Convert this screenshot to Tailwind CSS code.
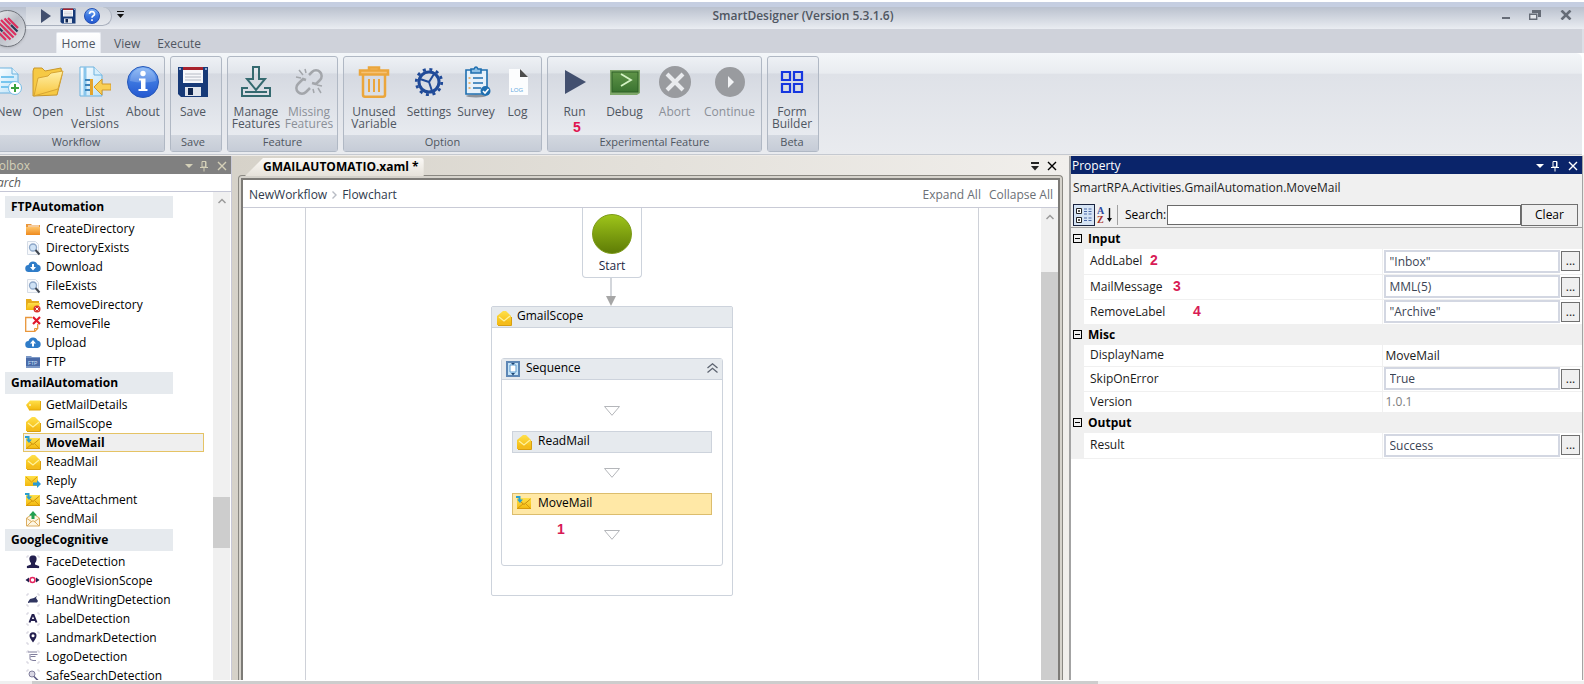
<!DOCTYPE html>
<html lang="en">
<head>
  <meta charset="UTF-8" />
  <meta name="viewport" content="width=device-width, initial-scale=1.0" />
  <title>SmartDesigner</title>

  <!-- Tailwind CSS for styling -->
  <script src="https://cdn.jsdelivr.net/npm/@tailwindcss/browser@4"></script>
</head>

<body class="h-screen flex flex-col overflow-hidden bg-white font-['Open_Sans',sans-serif] text-[12px] leading-4 text-black">

  <!-- Shared icons -->
  <svg class="absolute size-0" aria-hidden="true">
    <defs>
      <linearGradient id="gYellow" x1="0" y1="0" x2="0" y2="1"><stop offset="0" stop-color="#ffe04a" /><stop offset="1" stop-color="#f2b70c" /></linearGradient>
      <linearGradient id="gFolder" x1="0" y1="0" x2="0" y2="1"><stop offset="0" stop-color="#fff0a8" /><stop offset="1" stop-color="#f8c53c" /></linearGradient>
      <linearGradient id="gOrange" x1="0" y1="0" x2="0" y2="1"><stop offset="0" stop-color="#ffc56b" /><stop offset="1" stop-color="#ee8a1d" /></linearGradient>
      <linearGradient id="gBlue" x1="0" y1="0" x2="0" y2="1"><stop offset="0" stop-color="#7fb2f5" /><stop offset="0.5" stop-color="#3b76df" /><stop offset="1" stop-color="#2458d0" /></linearGradient>
      <linearGradient id="gGreen" x1="0" y1="0" x2="0" y2="1"><stop offset="0" stop-color="#5f9448" /><stop offset="1" stop-color="#3a7330" /></linearGradient>
      <linearGradient id="gPage" x1="0" y1="0" x2="1" y2="1"><stop offset="0" stop-color="#ffffff" /><stop offset="1" stop-color="#b9e1f8" /></linearGradient>
    </defs>
    <symbol id="floppy" viewBox="0 0 32 32">
      <path d="M1 1h30v30H4l-3-3z" fill="#173a78" />
      <rect x="6" y="1" width="20" height="3" fill="#a8222c" />
      <rect x="6" y="4" width="20" height="13" fill="#f6f7fa" />
      <path d="M8 8h16M8 11h16M8 14h16" stroke="#b5bac4" />
      <rect x="8" y="21" width="16" height="9" fill="#dfe4ec" />
      <rect x="11" y="22" width="5" height="7" fill="#10264f" />
      <path d="M2 2h2v2H2zM28 2h2v2h-2z" fill="#8aa3cc" />
    </symbol>
    <symbol id="mailOpen" viewBox="0 0 16 16">
      <path d="M1 6l6-5h3l5 5v9H1z" fill="url(#gYellow)" />
      <path d="M1 15l6-5h3l5 5" fill="#f4bc1c" />
      <path d="M3 7l5 4 6-5" fill="none" stroke="#fff3a0" stroke-width="1.2" />
      <path d="M2 15.500h13.500V7" fill="none" stroke="#d79f12" />
    </symbol>
    <symbol id="mailMove" viewBox="0 0 16 16">
      <rect x="1" y="3" width="14" height="11" fill="url(#gYellow)" />
      <path d="M1 13.500h14M2 13l5-4M14 13L10 9" stroke="#d99a0a" fill="none" />
      <path d="M5 7l3 2.500L14.500 4" stroke="#c98d08" fill="none" />
      <path d="M0 1h4.500v3.500H7L4 8 1 4.500h1.500V3H0z" fill="#2a9fd0" />
    </symbol>
    <symbol id="mailTag" viewBox="0 0 16 16">
      <path d="M1 8l4-4.500h10v9.500H4z" fill="url(#gYellow)" />
      <path d="M4 13h11.500V4" fill="none" stroke="#e0a80f" />
      <circle cx="5" cy="8" r="1" fill="#fff6bd" />
    </symbol>
    <symbol id="mailReply" viewBox="0 0 16 16">
      <rect x="0" y="3" width="13" height="10" fill="url(#gYellow)" />
      <path d="M1 4l5.500 5L12 4" fill="none" stroke="#d99a0a" />
      <path d="M8 9.500h4V7l4 4-4 4v-2.500H8z" fill="#2b9ad6" />
    </symbol>
    <symbol id="mailSend" viewBox="0 0 16 16">
      <path d="M1.500 7L8 3l6.500 4v8h-13z" fill="#fdf6e4" stroke="#dcae62" />
      <path d="M2 15l5-5h2l5 5M2 7.500l5 3.500M14 7.500L9 11" fill="none" stroke="#dcae62" />
      <path d="M8 0l4 4.500H9.500V8h-3V4.500H4z" fill="#23a052" />
    </symbol>
    <symbol id="cloudDown" viewBox="0 0 16 16">
      <path d="M4 13a3.500 3.500 0 0 1-.5-7A4.800 4.800 0 0 1 12.500 5.500 3.800 3.800 0 0 1 12.500 13z" fill="#2f7cc8" />
      <path d="M7 5h2v3h2l-3 3.500L5 8h2z" fill="#fff" />
    </symbol>
    <symbol id="cloudUp" viewBox="0 0 16 16">
      <path d="M4 13a3.500 3.500 0 0 1-.5-7A4.800 4.800 0 0 1 12.500 5.500 3.800 3.800 0 0 1 12.500 13z" fill="#2f7cc8" />
      <path d="M7 11.500h2v-3h2L8 5 5 8.500h2z" fill="#fff" />
    </symbol>
    <symbol id="fileSearch" viewBox="0 0 16 16">
      <path d="M2.500 1.500h8l3 3v10h-11z" fill="#f7f9fc" stroke="#d5dce6" />
      <circle cx="8" cy="7.500" r="3.500" fill="#cfe2f5" stroke="#8da7c8" stroke-width="1.300" />
      <path d="M10.500 10l4 4.500" stroke="#3f4650" stroke-width="2" />
    </symbol>
    <symbol id="pin" viewBox="0 0 10 12">
      <path d="M3 1.500h4V7H3zM1 7.500h8M5 8v3.500M6.500 1v6" fill="none" stroke="currentColor" />
    </symbol>
    <symbol id="cross" viewBox="0 0 10 10">
      <path d="M1 1l8 8M9 1L1 9" fill="none" stroke="currentColor" stroke-width="1.400" />
    </symbol>
    <symbol id="corners" viewBox="0 0 16 16">
      <path d="M2 4V2h2M12 2h2v2M14 12v2h-2M4 14H2v-2" fill="none" stroke="#c9c6d4" stroke-width="0.800" />
    </symbol>
    <symbol id="flowTri" viewBox="0 0 16 10">
      <path d="M0.500 0.500h15L8 9.300z" fill="#fff" stroke="#b4b6ba" />
    </symbol>
  </svg>

  <!-- Title bar -->
  <header class="relative shrink-0 mt-[2px] h-[27px] border-t-[5px] border-[#c5cee1] bg-linear-to-b from-[#bac1ce] to-[#eaedf2] flex items-start text-[#4f5661]">
    <!-- App button -->
    <button class="absolute z-10 left-[-11px] top-[3px] size-[37px] rounded-full border border-[#70747c] bg-linear-to-br from-[#f4f5f7] via-[#b9bdc5] to-[#e6e8ec] shadow" aria-label="Application menu">
      <svg class="size-[35px]" viewBox="0 0 35 35" fill="none" stroke-width="2.200">
        <path d="M6 19l10 10M13 21l7.500 7.500M8.500 11.500l15 15M11 9l15 15M14.500 7.500l6 6M18 7l10 10" stroke="#dc2f5f" />
        <path d="M6.500 14.500l6 6M21 14l6.500 6.500" stroke="#2c3a58" />
      </svg>
    </button>
    <!-- Quick access -->
    <div class="ml-[26px] h-[19px] w-[86px] pl-[14px] pb-px flex items-center gap-[8px] rounded-r-full border-b border-r border-[#aab1be] bg-linear-to-b from-[#cdd2db] to-[#e6e9ee]">
      <button aria-label="Run"><svg class="w-3 h-[14px]" viewBox="0 0 12 14"><path d="M1 0l10 7-10 7z" fill="#43506f" /></svg></button>
      <button aria-label="Save"><svg class="size-4"><use href="#floppy" /></svg></button>
      <button aria-label="Help">
        <svg class="size-4" viewBox="0 0 16 16"><circle cx="8" cy="8" r="7.500" fill="url(#gBlue)" stroke="#2450b4" /><path d="M5.500 6a2.500 2.300 0 1 1 3.500 2c-.8.500-1 .8-1 1.800M8 11.300v1.700" fill="none" stroke="#fff" stroke-width="1.600" /></svg>
      </button>
    </div>
    <button class="ml-[5px] mt-1" aria-label="Customize quick access"><svg class="w-[7px] h-2" viewBox="0 0 7 8"><path d="M0 .5h7" stroke="#111" /><path d="M0 3h7L3.500 7z" fill="#111" /></svg></button>
    <h1 class="absolute inset-x-0 top-px pl-[22px] text-center font-semibold">SmartDesigner (Version 5.3.1.6)</h1>
    <div class="relative ml-auto mr-3 mt-[2px] flex items-center gap-[19px]">
      <button aria-label="Minimize"><svg class="w-2 h-3" viewBox="0 0 8 12"><path d="M0 8h8v2H0z" fill="#666c77" /></svg></button>
      <button aria-label="Restore"><svg class="w-3 h-[10px]" viewBox="0 0 12 10"><path d="M3 0h9v7H9V3H3z" fill="#666c77" /><path d="M.7 4.200h7v5h-7z" fill="#e4e7ec" stroke="#666c77" stroke-width="1.400" /></svg></button>
      <button aria-label="Close"><svg class="w-3 h-[10px]" viewBox="0 0 12 10"><path d="M1.500 .5l9 9M10.500 .5l-9 9" stroke="#666c77" stroke-width="2.600" /></svg></button>
    </div>
  </header>

  <!-- Ribbon tabs -->
  <nav class="shrink-0 h-6 pl-[56px] bg-[#cfd2da] border-r-2 border-[#dcdfe6] flex items-end text-[#4f5661]">
    <a href="#" class="h-[21px] w-[45px] pt-[3px] text-center rounded-t-xs bg-linear-to-b from-white to-[#f1f4f8] border-x border-t border-[#e6e9ef]">Home</a>
    <a href="#" class="h-[21px] ml-[13px] pt-1">View</a>
    <a href="#" class="h-[21px] ml-[17px] pt-1">Execute</a>
  </nav>

  <!-- Ribbon -->
  <section class="shrink-0 h-[102px] pt-[3px] pb-[2px] mr-[2px] flex gap-[5px] bg-[linear-gradient(#f3f6f9,#e9ecf0_20%,#dfe2e8_21%,#e9ebef)] border-b border-[#c5c9d0] rounded-tr-md text-[#4f5661] leading-3">

    <div class="w-[165px] rounded-r-[3px] border border-l-0 border-[#b0b8c4] bg-[linear-gradient(#eef1f5,#e1e5eb_17%,#d5d9e1_18%,#e8ebf0_84%)] flex flex-col overflow-hidden">
      <div class="flex-1 pt-[9px] pr-px flex justify-end">
        <button class="w-10 shrink-0 flex flex-col items-center justify-start gap-2">
          <svg class="size-8 overflow-visible" viewBox="0 0 32 32">
            <path d="M4 2h15l6 6v19H4z" fill="url(#gPage)" stroke="#6db3df" />
            <path d="M19 2v6h6" fill="#e1f2fb" stroke="#6db3df" />
            <path d="M8 11h13M8 16h13M8 21h10" stroke="#77c5ee" stroke-width="2" />
            <circle cx="22" cy="22" r="6.500" fill="#fff" stroke="#76bde6" />
            <path d="M22 18v8M18 22h8" stroke="#3ba23e" stroke-width="2" />
          </svg>
          New
        </button>
        <button class="w-[38px] shrink-0 flex flex-col items-center justify-start gap-2">
          <svg class="size-8" viewBox="0 0 32 32">
            <path d="M1 30V5l1-3h8l3 3 16-3 1 7-5 20z" fill="#f6c944" stroke="#c8962a" />
            <path d="M6 12l10-2 3-3 12-2-5 18L2 30z" fill="url(#gFolder)" stroke="#d7a534" />
          </svg>
          Open
        </button>
        <button class="w-14 shrink-0 flex flex-col items-center justify-start gap-2">
          <svg class="size-8" viewBox="0 0 32 32">
            <path d="M1 1h14l8 8v21H1z" fill="url(#gPage)" stroke="#6db3df" />
            <path d="M15 1v8h8" fill="#d8effb" stroke="#6db3df" />
            <path d="M6 1v29" stroke="#89c6ec" stroke-width="3" />
            <path d="M6 14h5M6 19h5M6 24h5" stroke="#3c82b8" stroke-width="2" />
            <path d="M11 13h3v16h-3z" fill="#e4a42c" />
            <path d="M15 21l8-8v5h9v6h-9v5z" fill="#f9cf55" stroke="#d49a2b" />
          </svg>
          <span>List<br />Versions</span>
        </button>
        <button class="w-10 shrink-0 flex flex-col items-center justify-start gap-2">
          <svg class="size-8" viewBox="0 0 32 32">
            <circle cx="16" cy="16" r="15.500" fill="url(#gBlue)" stroke="#2758b8" />
            <path d="M3 15a13 13 0 0 1 26 0q-13 3-26 0z" fill="#fff" opacity="0.200" />
            <circle cx="16" cy="7.500" r="2.700" fill="#fff" />
            <path d="M12 12.500h6.500v10.500h2v2h-9v-2h2.500v-8.500H12z" fill="#fff" />
          </svg>
          About
        </button>
      </div>
      <p class="h-4 pr-3 leading-[14px] text-[11px] text-center bg-linear-to-b from-[#d3d8e0] to-[#c6ccd7]">Workflow</p>
    </div>

    <div class="w-[52px] rounded-[3px] border border-[#b0b8c4] bg-[linear-gradient(#eef1f5,#e1e5eb_17%,#d5d9e1_18%,#e8ebf0_84%)] flex flex-col">
      <div class="flex-1 pt-[9px] pr-[6px] flex justify-center">
        <button class="w-10 flex flex-col items-center justify-start gap-2">
          <svg class="size-8"><use href="#floppy" /></svg>
          Save
        </button>
      </div>
      <p class="h-4 pr-[6px] leading-[14px] text-[11px] text-center bg-linear-to-b from-[#d3d8e0] to-[#c6ccd7]">Save</p>
    </div>

    <div class="w-[111px] rounded-[3px] border border-[#b0b8c4] bg-[linear-gradient(#eef1f5,#e1e5eb_17%,#d5d9e1_18%,#e8ebf0_84%)] flex flex-col">
      <div class="flex-1 pt-[9px] flex justify-center">
        <button class="w-[53px] flex flex-col items-center justify-start gap-2">
          <svg class="size-8" viewBox="0 0 32 32" fill="none" stroke="#356a70" stroke-width="2">
            <path d="M12 1h8M13 1v12H7l9 11 9-11h-6V1" />
            <path d="M8 22H2v8h28v-8h-6M5 26h22" />
          </svg>
          <span>Manage<br />Features</span>
        </button>
        <button class="w-[53px] flex flex-col items-center justify-start gap-2 text-[#8b9098]" disabled>
          <svg class="size-8" viewBox="0 0 32 32" fill="none" stroke="#a3a6ab" stroke-width="2.500">
            <path d="M16 9l3-3a5.500 5.500 0 0 1 8 8l-4 4-4-1" />
            <path d="M13 14l-3-1-5 5a5.500 5.500 0 0 0 8 8l4-4" />
            <path d="M6 4l4 5M12 3l1 4M3 11l5 1M25 22l3 5M20 23l1 4M24 19l5 1" stroke-width="1.500" />
          </svg>
          <span>Missing<br />Features</span>
        </button>
      </div>
      <p class="h-4 leading-[14px] text-[11px] text-center bg-linear-to-b from-[#d3d8e0] to-[#c6ccd7]">Feature</p>
    </div>

    <div class="w-[199px] rounded-[3px] border border-[#b0b8c4] bg-[linear-gradient(#eef1f5,#e1e5eb_17%,#d5d9e1_18%,#e8ebf0_84%)] flex flex-col">
      <div class="flex-1 pt-[9px] flex justify-center">
        <button class="w-14 flex flex-col items-center justify-start gap-2">
          <svg class="size-8" viewBox="0 0 32 32" fill="none" stroke="#eba63c" stroke-width="2.500">
            <path d="M2 4.500h28v4H2zM11 4V1.500h10V4" fill="#f6c274" />
            <path d="M5 9v20q0 1.700 2 1.700h18q2 0 2-1.700V9" />
            <path d="M11 13v13M16 13v13M21 13v13" stroke-width="2" />
          </svg>
          <span>Unused<br />Variable</span>
        </button>
        <button class="w-[54px] flex flex-col items-center justify-start gap-2">
          <svg class="size-8" viewBox="0 0 32 32" fill="none" stroke="#204a98">
            <circle cx="16" cy="16" r="10" stroke-width="3" />
            <circle cx="16" cy="16" r="12.700" stroke-width="2.800" stroke-dasharray="3 3.650" />
            <path d="M7 13l9 3 5-8M16 16l3 9" stroke-width="2" />
          </svg>
          Settings
        </button>
        <button class="w-10 flex flex-col items-center justify-start gap-2">
          <svg class="size-8" viewBox="0 0 32 32" fill="none" stroke="#1f6fb0" stroke-width="1.600">
            <ellipse cx="16" cy="30" rx="10" ry="1.500" fill="#8d939b" stroke="none" />
            <path d="M11 4H6v24h21V4h-6" fill="#e6f1fa" />
            <path d="M11 3h3q2-4 4 0h3v4H11z" fill="#8dc0e6" />
            <path d="M13 12h10M13 17h10M13 22h8" />
            <path d="M8.500 12h2M8.500 17h2M8.500 22h2" stroke="#eda34b" />
            <circle cx="25.500" cy="25" r="5" fill="#1f6fb0" stroke="none" />
            <path d="M23 25l2 2 3.500-4" stroke="#fff" />
          </svg>
          Survey
        </button>
        <button class="w-[43px] flex flex-col items-center justify-start gap-2">
          <svg class="size-8" viewBox="0 0 32 32">
            <path d="M7 3h12l7 8v18H7z" fill="#fcfdfe" />
            <path d="M18 3l8 8h-8z" fill="#4d4d4d" />
            <text x="8.500" y="25.500" font-size="6" font-family="Liberation Sans" fill="#64a9de">LOG</text>
          </svg>
          Log
        </button>
      </div>
      <p class="h-4 leading-[14px] text-[11px] text-center bg-linear-to-b from-[#d3d8e0] to-[#c6ccd7]">Option</p>
    </div>

    <div class="relative w-[215px] rounded-[3px] border border-[#b0b8c4] bg-[linear-gradient(#eef1f5,#e1e5eb_17%,#d5d9e1_18%,#e8ebf0_84%)] flex flex-col">
      <div class="flex-1 pt-[9px] flex justify-center">
        <button class="w-[50px] flex flex-col items-center justify-start gap-2">
          <svg class="size-8" viewBox="0 0 32 32"><path d="M6 4l21 12L6 28z" fill="#43506f" /></svg>
          Run
        </button>
        <button class="w-[50px] flex flex-col items-center justify-start gap-2">
          <svg class="size-8" viewBox="0 0 32 32">
            <path d="M1 4h30v23l-3 2H1z" fill="#7fa86a" />
            <rect x="3" y="6" width="26" height="20" fill="url(#gGreen)" stroke="#2f6127" />
            <path d="M12 8l10 6-10 6" fill="none" stroke="#d4f3c4" stroke-width="1.800" />
          </svg>
          Debug
        </button>
        <button class="w-[50px] flex flex-col items-center justify-start gap-2 text-[#8b9098]" disabled>
          <svg class="size-8" viewBox="0 0 32 32"><circle cx="16" cy="16" r="16" fill="#999b9f" /><path d="M8 8l16 16M24 8L8 24" stroke="#e9ebee" stroke-width="4" /></svg>
          Abort
        </button>
        <button class="w-[60px] flex flex-col items-center justify-start gap-2 text-[#8b9098]" disabled>
          <svg class="size-8" viewBox="0 0 32 32"><circle cx="16" cy="16" r="15" fill="#999b9f" /><path d="M14 10l6 6-6 6z" fill="#f2f3f5" /></svg>
          Continue
        </button>
      </div>
      <p class="h-4 leading-[14px] text-[11px] text-center bg-linear-to-b from-[#d3d8e0] to-[#c6ccd7]">Experimental Feature</p>
      <b class="absolute left-[25px] top-[62px] font-['Liberation_Sans',sans-serif] text-[14px] leading-4 text-[#e0144f]">5</b>
    </div>

    <div class="w-[52px] rounded-[3px] border border-[#b0b8c4] bg-[linear-gradient(#eef1f5,#e1e5eb_17%,#d5d9e1_18%,#e8ebf0_84%)] flex flex-col">
      <div class="flex-1 pt-[9px] pr-[2px] flex justify-center">
        <button class="flex flex-col items-center justify-start gap-2">
          <svg class="size-8" viewBox="0 0 32 32" fill="none" stroke="#1637e0" stroke-width="2.200">
            <path d="M6 6h8v8H6zM18 6h8v8h-8zM6 18h8v8H6zM18 18h8v8h-8z" />
          </svg>
          <span>Form<br />Builder</span>
        </button>
      </div>
      <p class="h-4 pr-[2px] leading-[14px] text-[11px] text-center bg-linear-to-b from-[#d3d8e0] to-[#c6ccd7]">Beta</p>
    </div>
  </section>

  <!-- Work area -->
  <main class="flex-1 min-h-0 pt-px flex bg-[#efece8]">

    <!-- Toolbox -->
    <aside class="w-[232px] shrink-0 bg-white border-r border-[#c9c9d6] flex flex-col overflow-hidden">
      <div class="h-[18px] shrink-0 bg-[#808080] pr-1 pt-px flex items-center text-[#d4d0b8]">
        <h2 class="flex-1 -ml-[15px]">Toolbox</h2>
        <button class="mr-[6px]" aria-label="Window options"><svg class="w-2 h-1" viewBox="0 0 8 4"><path d="M0 0h8L4 4z" fill="currentColor" /></svg></button>
        <button class="mr-2" aria-label="Pin"><svg class="w-[10px] h-3"><use href="#pin" /></svg></button>
        <button aria-label="Close toolbox"><svg class="size-[10px]"><use href="#cross" /></svg></button>
      </div>
      <input type="text" placeholder="Search" aria-label="Search toolbox" class="h-[18px] shrink-0 -ml-[15px] border-b border-[#c5c7d6] italic placeholder:text-[#5a5a5a] outline-none" />
      <div class="flex-1 min-h-0 pr-px flex">
        <div class="flex-1 pt-[3px] overflow-hidden">
          <h3 class="ml-[5px] my-px w-[168px] h-[22px] pl-[6px] leading-[22px] font-bold bg-[#e6eaee]">FTPAutomation</h3>
          <ul>
            <li class="h-[19px] pl-[25px] flex items-center gap-[5px]"><svg class="size-4" viewBox="0 0 16 16"><path d="M1 3h5l1 1h8v10H1z" fill="#e9963a" /><path d="M1 6h14v8H1z" fill="url(#gOrange)" /><path d="M3 5h11" stroke="#fff" /></svg>CreateDirectory</li>
            <li class="h-[19px] pl-[25px] flex items-center gap-[5px]"><svg class="size-4"><use href="#fileSearch" /></svg>DirectoryExists</li>
            <li class="h-[19px] pl-[25px] flex items-center gap-[5px]"><svg class="size-4"><use href="#cloudDown" /></svg>Download</li>
            <li class="h-[19px] pl-[25px] flex items-center gap-[5px]"><svg class="size-4"><use href="#fileSearch" /></svg>FileExists</li>
            <li class="h-[19px] pl-[25px] flex items-center gap-[5px]"><svg class="size-4" viewBox="0 0 16 16"><path d="M1 13V2h5l1 2h7v9z" fill="#e6ac1d" /><path d="M3 6h12l-2 7H1z" fill="url(#gYellow)" /><circle cx="12" cy="12" r="3.500" fill="#d8342c" /><path d="M10.500 10.500l3 3M13.500 10.500l-3 3" stroke="#fff" /></svg>RemoveDirectory</li>
            <li class="h-[19px] pl-[25px] flex items-center gap-[5px]"><svg class="size-4" viewBox="0 0 16 16"><path d="M7 1.500H.700v14h9l3-3V8" fill="#fff" stroke="#e9963a" stroke-width="1.300" /><path d="M9.500 15.500v-3h3" fill="none" stroke="#e9963a" /><path d="M8 1l7 7M15 1L8 8" stroke="#e0182d" stroke-width="2.200" /></svg>RemoveFile</li>
            <li class="h-[19px] pl-[25px] flex items-center gap-[5px]"><svg class="size-4"><use href="#cloudUp" /></svg>Upload</li>
            <li class="h-[19px] pl-[25px] flex items-center gap-[5px]"><svg class="size-4" viewBox="0 0 16 16"><path d="M1 2h5l1 1h8v11H1z" fill="#7b98c6" /><path d="M1 4h14v8H1z" fill="#4a6ba8" /><text x="3" y="10.500" font-size="5" font-family="Liberation Sans" fill="#cfe0f8">FTP</text></svg>FTP</li>
          </ul>
          <h3 class="ml-[5px] my-px w-[168px] h-[22px] pl-[6px] leading-[22px] font-bold bg-[#e6eaee]">GmailAutomation</h3>
          <ul>
            <li class="h-[19px] pl-[25px] flex items-center gap-[5px]"><svg class="size-4"><use href="#mailTag" /></svg>GetMailDetails</li>
            <li class="h-[19px] pl-[25px] flex items-center gap-[5px]"><svg class="size-4"><use href="#mailOpen" /></svg>GmailScope</li>
            <li class="h-[19px] ml-[23px] w-[181px] pl-px flex items-center gap-[5px] font-bold bg-[#efefef] border border-[#e5c365]"><svg class="size-4"><use href="#mailMove" /></svg>MoveMail</li>
            <li class="h-[19px] pl-[25px] flex items-center gap-[5px]"><svg class="size-4"><use href="#mailOpen" /></svg>ReadMail</li>
            <li class="h-[19px] pl-[25px] flex items-center gap-[5px]"><svg class="size-4"><use href="#mailReply" /></svg>Reply</li>
            <li class="h-[19px] pl-[25px] flex items-center gap-[5px]"><svg class="size-4"><use href="#mailMove" /></svg>SaveAttachment</li>
            <li class="h-[19px] pl-[25px] flex items-center gap-[5px]"><svg class="size-4"><use href="#mailSend" /></svg>SendMail</li>
          </ul>
          <h3 class="ml-[5px] my-px w-[168px] h-[22px] pl-[6px] leading-[22px] font-bold bg-[#e6eaee]">GoogleCognitive</h3>
          <ul>
            <li class="h-[19px] pl-[25px] flex items-center gap-[5px]"><svg class="size-4" viewBox="0 0 16 16"><use href="#corners" /><path d="M8 1.500c3 0 4 2 3.500 4.500-.3 1.500-1 2.500-1.500 3v1.500l4 1.500v2H2v-2L6 10.500V9C5.500 8.500 4.800 7.500 4.500 6 4 3.500 5 1.500 8 1.500z" fill="#231f4e" /></svg>FaceDetection</li>
            <li class="h-[19px] pl-[25px] flex items-center gap-[5px]"><svg class="size-4" viewBox="0 0 16 16"><path d="M4 4.500v5L.500 7zM11 4.500v5L14.500 7z" fill="#231f4e" /><circle cx="7.500" cy="7" r="2.500" fill="none" stroke="#e3265f" stroke-width="1.600" /></svg>GoogleVisionScope</li>
            <li class="h-[19px] pl-[25px] flex items-center gap-[5px]"><svg class="size-4" viewBox="0 0 16 16"><use href="#corners" /><path d="M3 10l2-3 4-1 3-2-1 2 2 3-1 1.500H5L3 11z" fill="#2f3560" /></svg>HandWritingDetection</li>
            <li class="h-[19px] pl-[25px] flex items-center gap-[5px]"><svg class="size-4" viewBox="0 0 16 16"><use href="#corners" /><path d="M4.500 11.500L7.500 4h1l3 7.500M6 9h4" fill="none" stroke="#231f4e" stroke-width="2" /></svg>LabelDetection</li>
            <li class="h-[19px] pl-[25px] flex items-center gap-[5px]"><svg class="size-4" viewBox="0 0 16 16"><use href="#corners" /><path d="M8 12.500C6 9.500 4.500 8 4.500 5.800a3.500 3.500 0 0 1 7 0C11.500 8 10 9.500 8 12.500z" fill="#231f4e" /><circle cx="8" cy="5.800" r="1.500" fill="#fff" /></svg>LandmarkDetection</li>
            <li class="h-[19px] pl-[25px] flex items-center gap-[5px]"><svg class="size-4" viewBox="0 0 16 16"><use href="#corners" /><path d="M3 3h9M5.500 5.500h7M5.500 7.500h5M5 5v5.500l3 1h3" fill="none" stroke="#807e9c" /></svg>LogoDetection</li>
            <li class="h-[19px] pl-[25px] flex items-center gap-[5px]"><svg class="size-4" viewBox="0 0 16 16"><use href="#corners" /><circle cx="7" cy="6" r="3" fill="#d9d7e4" stroke="#807e9c" /><path d="M9 8.500l4 4" stroke="#5a5880" stroke-width="1.600" /></svg>SafeSearchDetection</li>
          </ul>
        </div>
        <!-- Scrollbar -->
        <div class="w-[17px] bg-[#f0f0f0] flex flex-col">
          <button class="h-[17px] flex justify-center items-center" aria-label="Scroll up"><svg class="w-2 h-[6px]" viewBox="0 0 8 6"><path d="M.5 5L4 1.500 7.500 5" fill="none" stroke="#9a9a9a" stroke-width="1.500" /></svg></button>
          <div class="mt-[288px] h-[51px] bg-[#cdcdcd]"></div>
        </div>
      </div>
    </aside>

    <!-- Document -->
    <section class="flex-1 min-w-0 pl-[6px] pr-[6px] bg-linear-to-r from-[#d6d2c9] to-[#f1efec] flex flex-col">
      <div class="h-[19px] shrink-0 pl-[7px] pr-[6px] pt-[2px] flex items-start">
        <div class="h-[18px] pl-[18px] pr-[5px] leading-[17px] font-bold whitespace-nowrap bg-linear-to-b from-[#fbf9f6] to-[#e6e2da] rounded-tr-[3px] [clip-path:polygon(18px_0,100%_0,100%_100%,0_100%)]">GMAILAUTOMATIO.xaml *</div>
        <button class="ml-auto mt-1" aria-label="Document list"><svg class="w-2 h-[9px]" viewBox="0 0 8 9"><path d="M0 1h8" stroke="#222" stroke-width="2" /><path d="M0 4h8L4 8.500z" fill="#222" /></svg></button>
        <button class="ml-2 mt-[3px]" aria-label="Close document"><svg class="size-[10px]"><use href="#cross" /></svg></button>
      </div>
      <div class="flex-1 min-h-0 pt-[2px] px-[2px] bg-[#d6d3cc] border border-b-0 border-[#8a8882] rounded-t-[4px] flex">
        <div class="flex-1 min-w-0 bg-white border-2 border-b-0 border-[#7d7b77] flex flex-col">
          <div class="h-7 shrink-0 pl-[6px] pr-[5px] pt-[2px] flex items-center border-b border-[#c9cbd6] text-[#2f3a4c]">
            <a href="#">NewWorkflow</a>
            <svg class="mx-[5px] w-[5px] h-2" viewBox="0 0 5 8"><path d="M.5 .5L4 4 .5 7.500" fill="none" stroke="#b8bcc4" stroke-width="1.400" /></svg>
            <a href="#">Flowchart</a>
            <button class="ml-auto text-[#6b6f76]">Expand All</button>
            <button class="ml-2 text-[#6b6f76]">Collapse All</button>
          </div>
          <div class="flex-1 min-h-0 flex">
            <!-- Flowchart canvas -->
            <div class="flex-1 pl-[62px] pr-[62px] overflow-hidden">
              <div class="relative h-full border-x border-[#ced1d8]">
                <div class="absolute left-[276px] top-0 w-[60px] h-[70px] pt-[6px] flex flex-col items-center gap-1 border border-t-0 border-[#cdd3dc] rounded-b-[4px] text-[#1c2846]">
                  <span class="size-10 rounded-full border border-[#7c9a18] bg-linear-to-b from-[#9ec41a] to-[#5f7d06]"></span>
                  Start
                </div>
                <svg class="absolute left-[300px] top-[70px] w-[10px] h-7" viewBox="0 0 10 28"><path d="M5 0v20" stroke="#c4c8cf" stroke-width="1.500" /><path d="M0 18h10L5 28z" fill="#a6a6a6" /></svg>
                <div class="absolute left-[185px] top-[98px] w-[242px] h-[290px] border border-[#cdd3dc] rounded-xs flex flex-col">
                  <div class="h-[21px] pl-1 pb-[2px] flex items-center gap-[5px] bg-[#e6eaee] border-b border-[#cdd3dc]">
                    <svg class="mt-1 size-4"><use href="#mailOpen" /></svg>GmailScope
                  </div>
                  <div class="mt-[30px] mx-[9px] h-[208px] border border-[#cdd3dc] rounded-[3px] flex flex-col items-center">
                    <div class="w-full h-[21px] pl-[3px] pr-1 pb-[2px] flex items-center gap-[5px] bg-[#e6eaee] border-b border-[#cdd3dc]">
                      <svg class="mt-[2px] size-4" viewBox="0 0 16 16"><path d="M1 0h14v16H1z" fill="#5c86b5" /><path d="M3 2h10v12H3z" fill="#c5e3f7" /><path d="M5 4h6v7H5z" fill="#fff" stroke="#5c9bd0" /><path d="M6 2h4L8 4zM6 12h4l-2 2.500z" fill="#1d4675" /></svg>
                      Sequence
                      <button class="ml-auto" aria-label="Collapse Sequence"><svg class="w-[11px] h-[10px]" viewBox="0 0 11 10"><path d="M.5 5l5-4.200 5 4.200M.5 9.500l5-4.200 5 4.200" fill="none" stroke="#5d6470" stroke-width="1.300" /></svg></button>
                    </div>
                    <svg class="mt-[26px] w-4 h-[10px]"><use href="#flowTri" /></svg>
                    <div class="mt-[15px] w-[200px] h-[22px] pl-[3px] pb-[2px] flex items-center gap-[6px] bg-[#e6eaee] border border-[#cdd3dc]">
                      <svg class="mt-[2px] size-4"><use href="#mailOpen" /></svg>ReadMail
                    </div>
                    <svg class="mt-[15px] w-4 h-[10px]"><use href="#flowTri" /></svg>
                    <div class="relative mt-[15px] w-[200px] h-[22px] pl-[3px] pb-[2px] flex items-center gap-[6px] bg-[#ffe8a6] border border-[#dcbd6d]">
                      <svg class="size-4"><use href="#mailMove" /></svg>MoveMail
                      <b class="absolute left-[44px] top-[27px] font-['Liberation_Sans',sans-serif] text-[14px] leading-4 text-[#d81b55]">1</b>
                    </div>
                    <svg class="mt-[15px] w-4 h-[10px]"><use href="#flowTri" /></svg>
                  </div>
                </div>
              </div>
            </div>
            <!-- Scrollbar -->
            <div class="w-[17px] bg-[#f0f0f0] flex flex-col">
              <button class="h-[17px] flex justify-center items-center" aria-label="Scroll up"><svg class="w-2 h-[6px]" viewBox="0 0 8 6"><path d="M.5 5L4 1.500 7.500 5" fill="none" stroke="#9a9a9a" stroke-width="1.500" /></svg></button>
              <div class="mt-[47px] flex-1 bg-[#cdcdcd]"></div>
            </div>
          </div>
        </div>
      </div>
    </section>

    <!-- Property panel -->
    <aside class="w-[514px] mr-px shrink-0 bg-white border-l-2 border-r border-[#a3a3a3] flex flex-col">
      <div class="h-[18px] shrink-0 bg-[#0a246a] pl-px pr-1 pt-px flex items-center text-white">
        <h2 class="flex-1">Property</h2>
        <button class="mr-[6px]" aria-label="Window options"><svg class="w-2 h-1" viewBox="0 0 8 4"><path d="M0 0h8L4 4z" fill="currentColor" /></svg></button>
        <button class="mr-2" aria-label="Pin"><svg class="w-[10px] h-3"><use href="#pin" /></svg></button>
        <button aria-label="Close property panel"><svg class="size-[10px]"><use href="#cross" /></svg></button>
      </div>
      <p class="h-7 leading-7 pl-[2px] bg-[#f0f0f0] text-[#1e1e1e]">SmartRPA.Activities.GmailAutomation.MoveMail</p>
      <div class="h-[26px] pl-[2px] pr-1 pt-px flex items-center bg-[#f0f0f0] border-b border-[#a0a0a0]">
        <button class="size-[22px] flex items-center justify-center bg-[#d6e4f5] border border-[#1a2440]" aria-label="Categorized">
          <svg class="size-[18px]" viewBox="0 0 18 18" fill="none"><path d="M1.500 2.500h5v5h-5zM1.500 11.500h5v5h-5z" fill="#fff" stroke="#222" /><path d="M3 5h2M4 4v2M3 14h2M4 13v2" stroke="#222" /><path d="M9 3h3M13.500 3h3M9 5.500h3M13.500 5.500h3M9 8h3M13.500 8h3M9 12h3M13.500 12h3M9 14.500h3M13.500 14.500h3" stroke="#4c6aa8" /></svg>
        </button>
        <button class="ml-[2px] size-4" aria-label="Sort alphabetically">
          <svg class="size-4" viewBox="0 0 16 16"><text x="0" y="7" font-size="10" font-weight="bold" font-family="Liberation Serif" fill="#2c4aa0">A</text><text x="0" y="16" font-size="10" font-weight="bold" font-family="Liberation Serif" fill="#a8322c">Z</text><path d="M12.500 1v12" stroke="#111" stroke-width="1.400" /><path d="M10 11h5l-2.500 4z" fill="#111" /></svg>
        </button>
        <span class="ml-1 mr-[7px] w-px h-5 bg-[#a0a0a0]"></span>
        <label for="propSearch" class="mr-px">Search:</label>
        <input id="propSearch" type="text" class="flex-1 h-5 px-1 bg-white border border-[#6a6a6a] outline-none" />
        <button class="w-[57px] h-[22px] bg-[#efefef] border border-[#707070]">Clear</button>
      </div>

      <table class="w-full table-fixed border-collapse text-[#1a1a1a]">
        <colgroup><col class="w-[13px]" /><col class="w-[298px]" /><col /></colgroup>
        <tbody>
          <tr class="h-[21px] bg-[#f0f0f0]">
            <td class="p-0 pl-[2px]"><button class="block size-[9px] border border-black" aria-label="Collapse Input"><span class="block mx-px h-px bg-black"></span></button></td>
            <th colspan="2" class="p-0 pl-1 text-left text-black">Input</th>
          </tr>
          <tr class="h-[25px] border-b border-[#f0f0f0]">
            <td class="p-0 bg-[#f0f0f0]"></td>
            <td class="relative p-0 pl-[6px]"><label for="addLabel">AddLabel</label><b class="absolute left-[66px] top-[3px] font-['Liberation_Sans',sans-serif] text-[14px] leading-4 text-[#d81b55]">2</b></td>
            <td class="p-0 pl-px pr-[2px] border-l border-[#f0f0f0]"><div class="flex items-center gap-px"><input id="addLabel" type="text" value='"Inbox"' class="flex-1 min-w-0 h-[23px] pl-1 border-2 border-[#d3d7e2] text-[#3b4454] outline-none" /><button class="w-[19px] h-5 leading-3 bg-[#efefef] border border-[#707070]">...</button></div></td>
          </tr>
          <tr class="h-[25px] border-b border-[#f0f0f0]">
            <td class="p-0 bg-[#f0f0f0]"></td>
            <td class="relative p-0 pl-[6px]"><label for="mailMessage">MailMessage</label><b class="absolute left-[89px] top-[3px] font-['Liberation_Sans',sans-serif] text-[14px] leading-4 text-[#d81b55]">3</b></td>
            <td class="p-0 pl-px pr-[2px] border-l border-[#f0f0f0]"><div class="flex items-center gap-px"><input id="mailMessage" type="text" value="MML(5)" class="flex-1 min-w-0 h-[23px] pl-1 border-2 border-[#d3d7e2] text-[#3b4454] outline-none" /><button class="w-[19px] h-5 leading-3 bg-[#efefef] border border-[#707070]">...</button></div></td>
          </tr>
          <tr class="h-[25px]">
            <td class="p-0 bg-[#f0f0f0]"></td>
            <td class="relative p-0 pl-[6px]"><label for="removeLabel">RemoveLabel</label><b class="absolute left-[109px] top-[3px] font-['Liberation_Sans',sans-serif] text-[14px] leading-4 text-[#d81b55]">4</b></td>
            <td class="p-0 pl-px pr-[2px] border-l border-[#f0f0f0]"><div class="flex items-center gap-px"><input id="removeLabel" type="text" value='"Archive"' class="flex-1 min-w-0 h-[23px] pl-1 border-2 border-[#d3d7e2] text-[#3b4454] outline-none" /><button class="w-[19px] h-5 leading-3 bg-[#efefef] border border-[#707070]">...</button></div></td>
          </tr>
        </tbody>
        <tbody>
          <tr class="h-[21px] bg-[#f0f0f0]">
            <td class="p-0 pl-[2px]"><button class="block size-[9px] border border-black" aria-label="Collapse Misc"><span class="block mx-px h-px bg-black"></span></button></td>
            <th colspan="2" class="p-0 pl-1 text-left text-black">Misc</th>
          </tr>
          <tr class="h-[21px] border-b border-[#f0f0f0]">
            <td class="p-0 bg-[#f0f0f0]"></td>
            <td class="p-0 pl-[6px]"><label for="displayName">DisplayName</label></td>
            <td class="p-0 pl-[3px] border-l border-[#f0f0f0]"><input id="displayName" type="text" value="MoveMail" class="block w-full h-5 outline-none" /></td>
          </tr>
          <tr class="h-[25px] border-b border-[#f0f0f0]">
            <td class="p-0 bg-[#f0f0f0]"></td>
            <td class="p-0 pl-[6px]"><label for="skipOnError">SkipOnError</label></td>
            <td class="p-0 pl-px pr-[2px] border-l border-[#f0f0f0]"><div class="flex items-center gap-px"><input id="skipOnError" type="text" value="True" class="flex-1 min-w-0 h-[23px] pl-1 border-2 border-[#d3d7e2] text-[#3b4454] outline-none" /><button class="w-[19px] h-5 leading-3 bg-[#efefef] border border-[#707070]">...</button></div></td>
          </tr>
          <tr class="h-[21px]">
            <td class="p-0 bg-[#f0f0f0]"></td>
            <td class="p-0 pl-[6px]"><label for="version">Version</label></td>
            <td class="p-0 pl-[3px] border-l border-[#f0f0f0]"><input id="version" type="text" value="1.0.1" readonly class="block w-full h-5 text-[#7d7d7d] outline-none" /></td>
          </tr>
        </tbody>
        <tbody>
          <tr class="h-[21px] bg-[#f0f0f0]">
            <td class="p-0 pl-[2px]"><button class="block size-[9px] border border-black" aria-label="Collapse Output"><span class="block mx-px h-px bg-black"></span></button></td>
            <th colspan="2" class="p-0 pl-1 text-left text-black">Output</th>
          </tr>
          <tr class="h-[25px] border-b border-[#f0f0f0]">
            <td class="p-0 bg-[#f0f0f0]"></td>
            <td class="p-0 pl-[6px]"><label for="result">Result</label></td>
            <td class="p-0 pl-px pr-[2px] border-l border-[#f0f0f0]"><div class="flex items-center gap-px"><input id="result" type="text" value="Success" class="flex-1 min-w-0 h-[23px] pl-1 border-2 border-[#d3d7e2] text-[#3b4454] outline-none" /><button class="w-[19px] h-5 leading-3 bg-[#efefef] border border-[#707070]">...</button></div></td>
          </tr>
        </tbody>
      </table>
    </aside>
  </main>

  <!-- Horizontal scrollbar -->
  <footer class="shrink-0 h-1 border-t border-white bg-[#f0f0f0] pl-8">
    <div class="h-full w-[1066px] bg-[#cdcdcd]"></div>
  </footer>

</body>
</html>
